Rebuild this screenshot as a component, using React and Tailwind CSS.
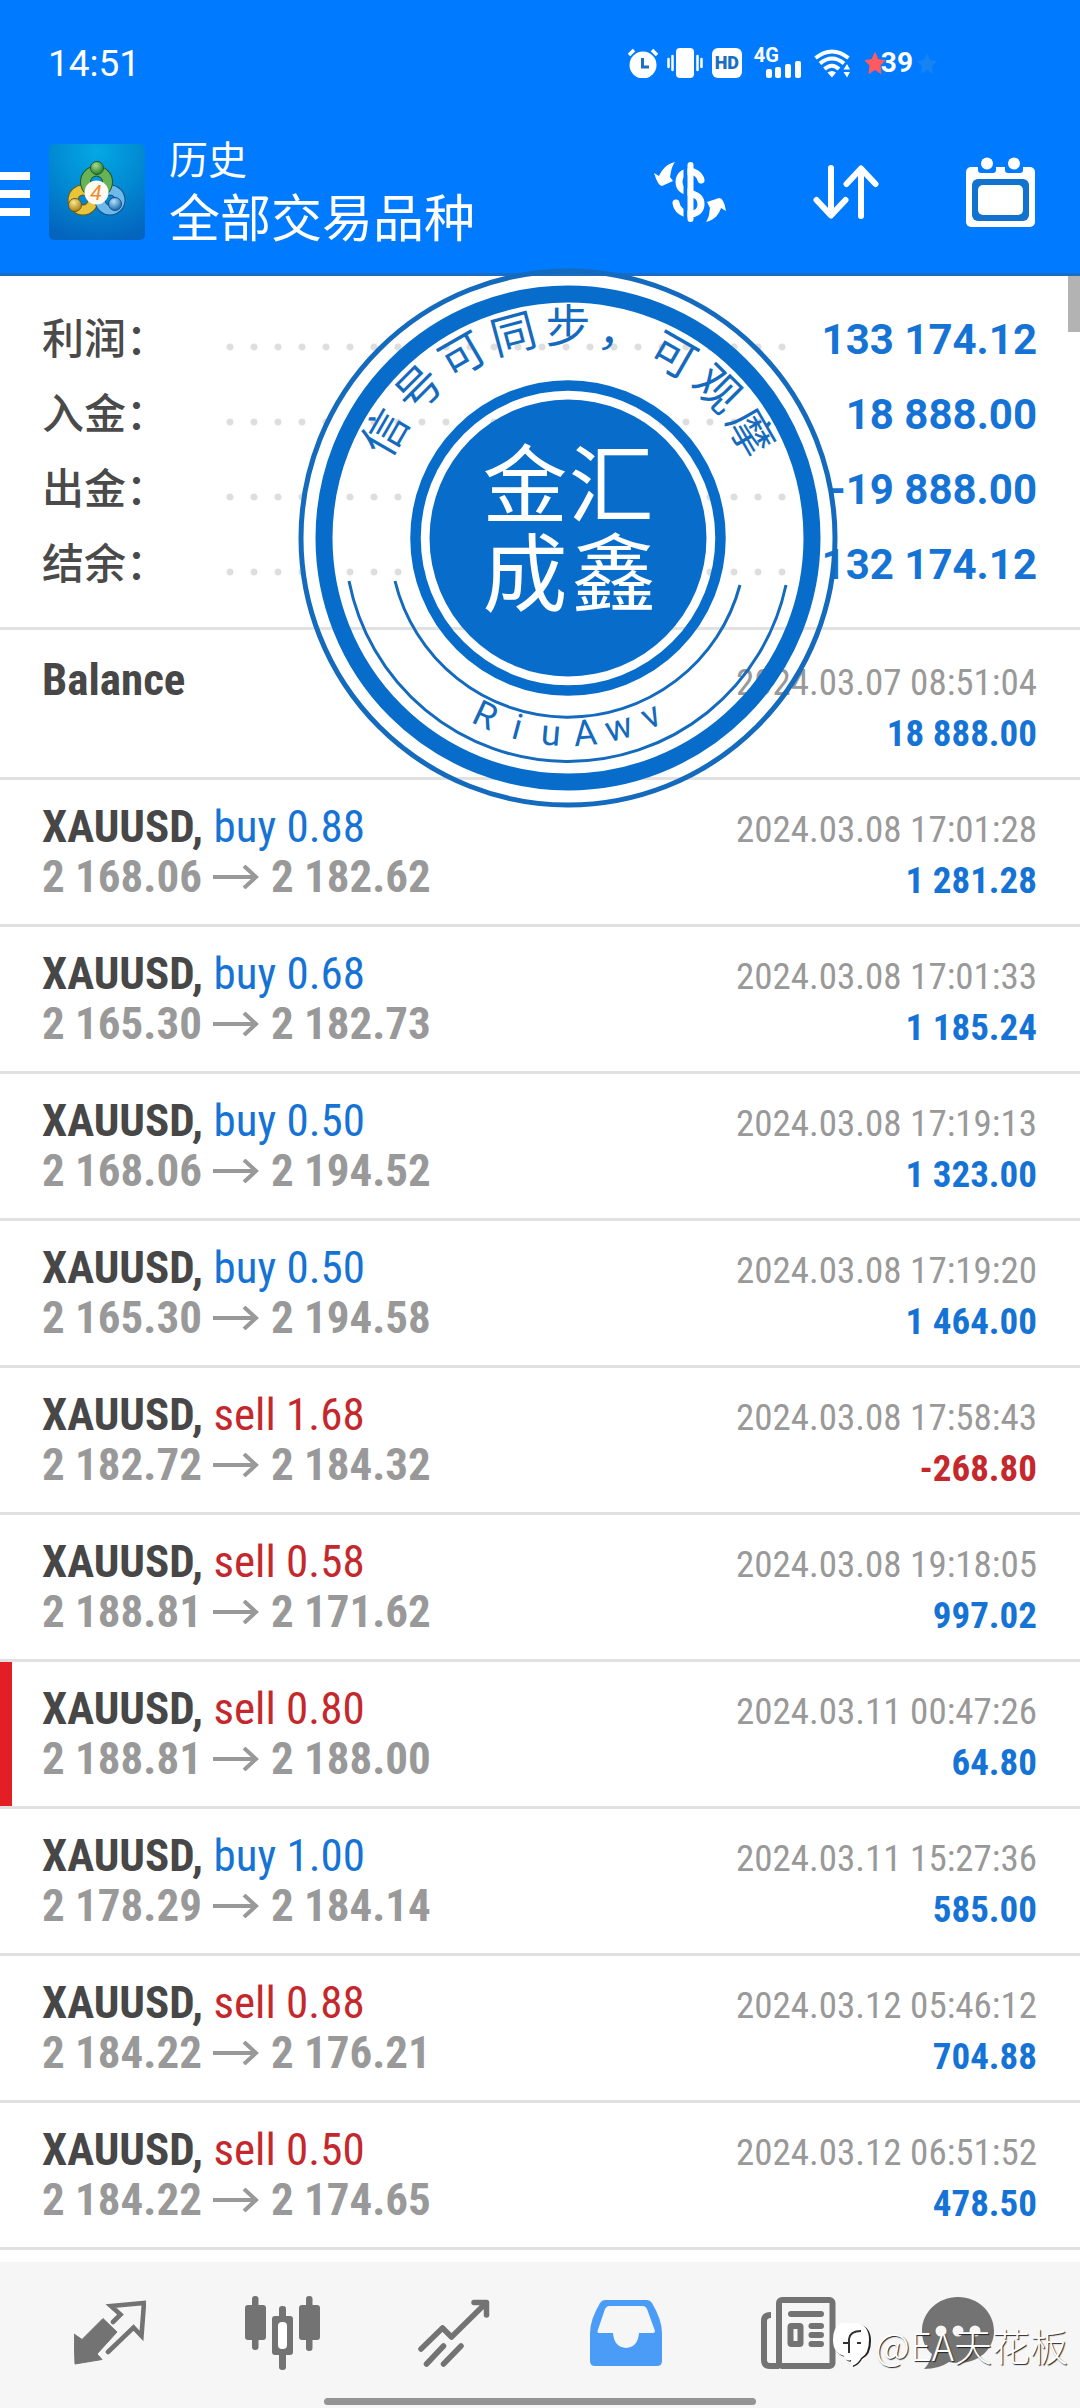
const deals = [
  { type: "buy", volume: "0.88", open: "2 168.06", close: "2 182.62", time: "2024.03.08 17:01:28", profit: "1 281.28" },
  { type: "buy", volume: "0.68", open: "2 165.30", close: "2 182.73", time: "2024.03.08 17:01:33", profit: "1 185.24" },
  { type: "buy", volume: "0.50", open: "2 168.06", close: "2 194.52", time: "2024.03.08 17:19:13", profit: "1 323.00" },
  { type: "buy", volume: "0.50", open: "2 165.30", close: "2 194.58", time: "2024.03.08 17:19:20", profit: "1 464.00" },
  { type: "sell", volume: "1.68", open: "2 182.72", close: "2 184.32", time: "2024.03.08 17:58:43", profit: "-268.80" },
  { type: "sell", volume: "0.58", open: "2 188.81", close: "2 171.62", time: "2024.03.08 19:18:05", profit: "997.02" },
  { type: "sell", volume: "0.80", open: "2 188.81", close: "2 188.00", time: "2024.03.11 00:47:26", profit: "64.80", marked: true },
  { type: "buy", volume: "1.00", open: "2 178.29", close: "2 184.14", time: "2024.03.11 15:27:36", profit: "585.00" },
  { type: "sell", volume: "0.88", open: "2 184.22", close: "2 176.21", time: "2024.03.12 05:46:12", profit: "704.88" },
  { type: "sell", volume: "0.50", open: "2 184.22", close: "2 174.65", time: "2024.03.12 06:51:52", profit: "478.50" },
];

const summary = [
  { label: "利润：", value: "133 174.12" },
  { label: "入金：", value: "18 888.00" },
  { label: "出金：", value: "-19 888.00" },
  { label: "结余：", value: "132 174.12" },
];

const STAR = "M10 0 L13 7 L20 8 L15 13 L16 21 L10 17 L4 21 L5 13 L0 8 L7 7 Z";

function StatusBar() {
  return (
    <div className="flex h-[126px] items-center justify-between pl-12 pr-[143px]">
      <span className="text-[37px] leading-none">14:51</span>
      <div className="flex items-center">
        <svg className="mr-[9px] h-[30px] w-[30px]" viewBox="0 0 30 30">
          <circle cx="15" cy="17" r="13.5" fill="currentColor" />
          <path d="M1 7 L6 2 M29 7 L24 2" stroke="currentColor" strokeWidth="3.5" />
          <path d="M14.5 10 V19 H21" fill="none" stroke="#1a6fc4" strokeWidth="3" />
        </svg>
        <svg className="mr-[9px] h-[30px] w-9" viewBox="0 0 36 30">
          <rect x="9" y="0" width="18" height="30" rx="4" fill="currentColor" />
          <path d="M1.5 11 V19 M5.5 8 V22 M30.5 8 V22 M34.5 11 V19" stroke="currentColor" strokeWidth="2.5" strokeLinecap="round" />
        </svg>
        <span className="mr-3 flex h-[30px] w-[30px] items-center justify-center rounded-md bg-white text-[18px] font-black leading-none text-[#1a6fc4]">
          HD
        </span>
        <div className="relative mr-[13px] h-[30px] w-[47px]">
          <span className="absolute left-0 top-0 text-[20px] font-bold leading-[15px]">4G</span>
          <svg className="absolute bottom-0 right-0 h-[18px] w-[35px]" viewBox="0 0 35 18" fill="currentColor">
            <rect x="0" y="9" width="6" height="9" rx="2" />
            <rect x="9" y="7" width="6" height="11" rx="2" />
            <rect x="19" y="4" width="6" height="14" rx="2" />
            <rect x="29" y="1" width="6" height="17" rx="2" />
          </svg>
        </div>
        <svg className="mr-[14px] h-[30px] w-[37px]" viewBox="0 0 37 30">
          <g fill="none" stroke="currentColor" strokeWidth="4">
            <path d="M1.5 10 Q18 -3 34.5 10" />
            <path d="M6 15.5 Q18 5.5 30 15.5" />
            <path d="M10.5 21 Q18 14.5 25 21" />
          </g>
          <path d="M13.5 24.5 Q18 21.5 22 24.5 L18 29.5 Z" fill="currentColor" />
          <path d="M29.5 21.5 L33 16 L36 21.5 Z M29.5 24 L33 29.5 L36 24 Z" fill="currentColor" />
        </svg>
        <svg className="h-[22px] w-[20px]" viewBox="0 0 20 21"><path d={STAR} fill="#ff5a60" stroke="#ff5a60" strokeLinejoin="round" /></svg>
        <span className="-ml-1 text-[28px] font-bold leading-none">39</span>
        <svg className="ml-1 h-[21px] w-[20px]" viewBox="0 0 20 21"><path d={STAR} fill="#1583f2" /></svg>
      </div>
    </div>
  );
}

function AppLogo() {
  return (
    <svg className="ml-[19px] h-24 w-24 shrink-0" viewBox="0 0 96 96" aria-label="MetaTrader 4">
      <defs>
        <radialGradient id="logo-bg" cx="50%" cy="8%" r="95%">
          <stop offset="0" stopColor="#03a8e4" />
          <stop offset="0.5" stopColor="#0289d2" />
          <stop offset="1" stopColor="#0464be" />
        </radialGradient>
        <radialGradient id="ball-g" cx="40%" cy="30%" r="70%"><stop offset="0" stopColor="#a9dc8c" /><stop offset="1" stopColor="#257b2c" /></radialGradient>
        <radialGradient id="ball-y" cx="40%" cy="30%" r="70%"><stop offset="0" stopColor="#fbe98a" /><stop offset="1" stopColor="#a8801a" /></radialGradient>
        <radialGradient id="ball-b" cx="40%" cy="30%" r="70%"><stop offset="0" stopColor="#b5e2fa" /><stop offset="1" stopColor="#1869ae" /></radialGradient>
      </defs>
      <rect width="96" height="96" rx="5" fill="url(#logo-bg)" />
      <g fill="none" strokeWidth="11">
        <circle cx="34" cy="56" r="10" stroke="#6b5a14" />
        <circle cx="34" cy="56" r="10" stroke="#e6c53c" strokeWidth="9" />
        <circle cx="61" cy="56" r="10" stroke="#164e85" />
        <circle cx="61" cy="56" r="10" stroke="#6db9ea" strokeWidth="9" />
        <circle cx="47.5" cy="38" r="11" stroke="#1e5926" />
        <circle cx="47.5" cy="38" r="11" stroke="#67b356" strokeWidth="9" />
      </g>
      <circle cx="48" cy="24" r="6.5" fill="url(#ball-g)" stroke="#1e5926" />
      <circle cx="26" cy="61" r="6.5" fill="url(#ball-y)" stroke="#6b5a14" />
      <circle cx="66" cy="60" r="6.5" fill="url(#ball-b)" stroke="#164e85" />
      <circle cx="47.5" cy="48.5" r="12" fill="#fffaf2" />
      <text x="47" y="56" textAnchor="middle" fontSize="21" fontStyle="italic" fill="#f08a2c">4</text>
    </svg>
  );
}

function Toolbar() {
  return (
    <div className="flex h-[150px] items-center border-b-3 border-[#1a6cc4] pb-4 pr-[45px]">
      <button aria-label="菜单" className="mt-1 flex w-[30px] flex-col gap-2.5">
        <span className="h-2 bg-white" />
        <span className="h-2 bg-white" />
        <span className="h-2 bg-white" />
      </button>
      <AppLogo />
      <h1 className="ml-6 flex-1 pt-2">
        <span className="block text-[39px] leading-12">历史</span>
        <span className="block text-[51px] leading-[70px]">全部交易品种</span>
      </h1>
      <div className="flex items-center gap-[87px]">
        <button aria-label="货币">
          <svg className="block h-[60px] w-[72px]" viewBox="0 0 72 60">
            <path d="M47 18 C44 6 25 7 25 20 C25 35 48 27 47 43 C46 56 24 55 22 41" fill="none" stroke="currentColor" strokeWidth="7" strokeLinecap="round" />
            <path d="M31.5 2 V58" stroke="#007aff" strokeWidth="4" />
            <path d="M36.5 3 V57" stroke="currentColor" strokeWidth="6" strokeLinecap="round" />
            <path d="M21 0 C17 5 17 11 16 15 L19 19 L8 24 Q4 24 0 11 L5 14 C8 8 12 2 21 0 Z" fill="currentColor" />
            <path d="M52 60 C56 54 55 50 56 46 L53 40 L65 36 Q70 36 72 49 L67 46 C65 52 61 58 52 60 Z" fill="currentColor" />
          </svg>
        </button>
        <button aria-label="排序">
          <svg className="block h-14 w-[66px]" viewBox="0 0 66 56" fill="none" stroke="currentColor" strokeWidth="6" strokeLinecap="round" strokeLinejoin="round">
            <path d="M18 4 V51 M3.500 36 L18 51.500 L32.500 36" />
            <path d="M48 52 V5 M33.500 20 L48 4.500 L62.500 20" />
          </svg>
        </button>
        <button aria-label="日期">
          <svg className="block h-[70px] w-[69px]" viewBox="0 0 69 70">
            <rect x="0" y="10" width="69" height="60" rx="5" fill="currentColor" />
            <path d="M12 8 H30 V13 Q30 16 27 16 H15 Q12 16 12 13 Z M39 8 H57 V13 Q57 16 54 16 H42 Q39 16 39 13 Z" fill="#007aff" />
            <circle cx="21" cy="6.5" r="6" fill="currentColor" />
            <circle cx="48" cy="6.5" r="6" fill="currentColor" />
            <rect x="6" y="22" width="57" height="42" rx="6" fill="#1173cf" />
            <rect x="12" y="28" width="45" height="30" rx="5" fill="currentColor" />
          </svg>
        </button>
      </div>
    </div>
  );
}

function Stamp() {
  const top = ["信", "号", "可", "同", "步", "，", "可", "观", "摩"];
  const bottom = ["R", "i", "u", "A", "w", "v"];

  return (
    <svg
      className="pointer-events-none absolute -top-2.5 left-1/2 z-10 -ml-[244px] h-[544px] w-[544px] font-['Noto_Sans_CJK_SC',sans-serif]"
      viewBox="-272 -272 544 544"
    >
      <g fill="none" stroke="#146abd">
        <circle r="267" strokeWidth="5" />
        <circle r="244" strokeWidth="17" stroke="#076cca" />
        <circle r="152.500" strokeWidth="10.500" stroke="#076cca" />
        <path d="M-219 43 A223 223 0 0 0 218 47" strokeWidth="3" />
        <path d="M-173 43 A178 178 0 0 0 172 47" strokeWidth="3" />
      </g>
      <circle r="138.500" fill="#076cca" />

      <g fontSize="85" textAnchor="middle" fill="#fff">
        <text x="-43" y="-22">金</text>
        <text x="43" y="-22">汇</text>
        <text x="-43" y="67">成</text>
        <text x="46" y="67">鑫</text>
      </g>

      {/* 环形文字 */}
      <g fontSize="45" textAnchor="middle" fill="#146abd">
        {top.map((char, i) => (
          <text key={i} y="-195" transform={`rotate(${(i - 4) * 15})`}>
            {char}
          </text>
        ))}
      </g>
      <g fontSize="36" textAnchor="middle" fill="#146abd" className="font-[Roboto,sans-serif]">
        {bottom.map((char, i) => (
          <text key={i} y="208" transform={`rotate(${25 - i * 10})`}>
            {char}
          </text>
        ))}
      </g>
    </svg>
  );
}

function Summary() {
  return (
    <section className="relative border-b-3 border-[#e1e1e1] pb-[25px] pl-[42px] pr-[43px] pt-[26px]">
      <dl>
        {summary.map((item) => (
          <div key={item.label} className="flex h-[75px] items-center">
            <dt className="w-44 text-[42px] font-medium leading-none text-[#4a4a4a]">{item.label}</dt>
            <span className="mt-[14px] h-6 flex-1 bg-[radial-gradient(circle,#dedede_3px,transparent_4px)] bg-[length:24px_24px]" />
            <dd className="w-[243px] whitespace-nowrap text-right text-[42px] font-bold leading-none text-[#1673d6]">
              {item.value}
            </dd>
          </div>
        ))}
      </dl>
      <Stamp />
      {/* 滚动条 */}
      <div className="absolute right-0 top-0 h-14 w-3 bg-[#b3b3b3]" />
    </section>
  );
}

function DealRow({ deal }) {
  const isBuy = deal.type === "buy";

  return (
    <li className="relative flex justify-between border-b-3 border-[#e1e1e1] pb-[18px] pl-[42px] pr-[43px] pt-[22px]">
      {deal.marked && <span className="absolute inset-y-0 left-0 w-3 bg-[#e31e24]" />}
      <div className="text-[45px] font-bold leading-[50px] text-[#999]">
        <p className="text-[#474747]">
          XAUUSD,{" "}
          <span className={isBuy ? "font-normal text-[#1673d6]" : "font-normal text-[#c4282d]"}>
            {deal.type} {deal.volume}
          </span>
        </p>
        <p className="flex items-center">
          {deal.open}
          <svg className="mx-[11px] h-6 w-[47px]" viewBox="0 0 47 24" fill="none" stroke="currentColor" strokeWidth="4">
            <path d="M0 12 H44 M31 1 L43 12 L31 23" />
          </svg>
          {deal.close}
        </p>
      </div>
      <div className="pt-0.5 text-right text-[37px] leading-[51px]">
        <p className="text-[#999]">{deal.time}</p>
        <p className={deal.profit.startsWith("-") ? "font-bold text-[#c4282d]" : "font-bold text-[#1673d6]"}>
          {deal.profit}
        </p>
      </div>
    </li>
  );
}

function TabBar() {
  return (
    <nav className="relative bg-[#f6f6f6] pb-[3px] pt-[34px] text-[#737373]">
      <div className="flex h-[74px] pl-6 pr-12">
        <button aria-label="行情" className="flex flex-1 items-center justify-center">
          <svg className="h-[66px] w-[72px]" viewBox="0 0 72 66">
            <path d="M0 34 L8 39.500 L29 18.500 L43 32 L23 54 L28 59.500 L1 64 Z" fill="currentColor" stroke="currentColor" strokeLinejoin="round" />
            <path d="M39 22 L46.500 14.500 L37 6 L70 3 L67.500 36 L59.500 27.500 L34 52" fill="none" stroke="currentColor" strokeWidth="4.600" strokeLinecap="round" />
          </svg>
        </button>
        <button aria-label="图表" className="flex flex-1 items-center justify-center">
          <svg className="h-[74px] w-[75px]" viewBox="0 0 75 74" fill="currentColor">
            <rect x="0" y="9" width="21" height="35" rx="3" />
            <rect x="7" y="0" width="6.500" height="54" rx="3" />
            <rect x="27" y="20" width="21" height="39" rx="3" />
            <rect x="34" y="10" width="7" height="64" rx="3" />
            <rect x="33" y="26" width="9" height="27" rx="4" fill="#fff" />
            <rect x="54" y="9" width="21" height="35" rx="3" />
            <rect x="61" y="0" width="6.500" height="55" rx="3" />
          </svg>
        </button>
        <button aria-label="交易" className="flex flex-1 items-center justify-center">
          <svg className="h-[68px] w-[72px]" viewBox="0 0 72 68" fill="none" stroke="currentColor" strokeWidth="5.500" strokeLinecap="round" strokeLinejoin="round">
            <path d="M3 50 L24.500 29 L33.500 38 L67 5 M56 3.500 H68.500 V16" />
            <path d="M8.500 65 L25.500 47 M25.500 65 L43 47" />
          </svg>
        </button>
        <button aria-label="历史" className="flex flex-1 items-center justify-center text-[#4a9cf6]">
          <svg className="h-[66px] w-[72px]" viewBox="0 0 72 66" fill="currentColor">
            <path d="M15 0 H57 Q60 0 62 3 Q72 20 72 33 V61 Q72 66 67 66 H5 Q0 66 0 61 V33 Q0 20 10 3 Q12 0 15 0 Z" />
            <path d="M19 6 H53 Q55.500 6 57 9 L65 31 Q65 33 63 33 H49 Q48 47 36 48 Q24 47 23 33 H9 Q7 33 7.500 31 L15 9 Q16.500 6 19 6 Z" fill="#f6f6f6" />
          </svg>
        </button>
        <button aria-label="新闻" className="flex flex-1 items-center justify-center">
          <svg className="h-[72px] w-[75px]" viewBox="0 0 75 72" fill="none" stroke="currentColor" strokeWidth="6" strokeLinecap="round">
            <rect x="18" y="3" width="53.500" height="66" rx="3" />
            <path d="M10 18 Q3 18 3 24 V63 Q3 69 9 69 H18" strokeLinecap="butt" />
            <path d="M30 17 H60 M50.500 29 H60 M50.500 38 H60 M50.500 47 H60" />
            <rect x="29.500" y="29" width="10" height="18" rx="1" strokeLinecap="butt" />
          </svg>
        </button>
        <button aria-label="聊天" className="flex w-[148px] items-center justify-center">
          <svg className="h-[72px] w-[72px]" viewBox="0 0 72 72" fill="currentColor">
            <path d="M36 0 C56 0 72 15 72 34 C72 53 56 66 36 66 Q32 66 27 65 Q17 72 2 72 Q8 66 10 57 C3 51 0 43 0 34 C0 15 16 0 36 0 Z" />
            <g fill="#f6f6f6">
              <circle cx="19" cy="34" r="5.5" />
              <circle cx="36" cy="34" r="5.5" />
              <circle cx="53" cy="34" r="5.5" />
            </g>
          </svg>
        </button>
      </div>
      <div className="mx-auto mt-7 h-[7px] w-2/5 rounded-full bg-[#949494]" />

      {/* 水印 */}
      <div className="absolute right-3 top-[54px] flex items-center gap-1 font-['Noto_Sans_CJK_SC',sans-serif] text-white">
        <svg className="h-[45px] w-[38px]" viewBox="0 0 38 45">
          <path d="M10 1 H26 Q38 4 38 18 Q38 32 29 36 Q27 41 20 44 L19 38 Q14 40 12 34 Q1 31 1 18 Q1 4 10 1 Z" fill="#222" />
          <path d="M9 0 H25 Q36 3 36 17 Q36 31 28 35 Q26 40 19 43 L18 37 Q13 39 11 33 Q0 30 0 17 Q0 3 9 0 Z" fill="#fff" />
          <path d="M10 20 H16 V30 M16 20 V16 Q17 8 28 8 M24 20 H28" fill="none" stroke="#333" strokeWidth="2" />
        </svg>
        <span className="text-[38px] font-light leading-[58px] [text-shadow:1px_1px_1px_#222]">@EA天花板</span>
      </div>
    </nav>
  );
}

export default function App() {
  return (
    <div className="min-h-screen bg-white font-[Roboto,'Noto_Sans_CJK_SC',sans-serif]">
      <header className="bg-[#007aff] text-white">
        <StatusBar />
        <Toolbar />
      </header>
      <main>
        <Summary />
        <ul className="mb-3 font-['Roboto_Condensed','Liberation_Sans_Narrow',sans-serif]">
          <li className="flex justify-between border-b-3 border-[#e1e1e1] pb-[18px] pl-[42px] pr-[43px] pt-[25px]">
            <p className="text-[45px] font-bold leading-[50px] text-[#474747]">Balance</p>
            <div className="pt-0.5 text-right text-[37px] leading-[51px]">
              <p className="text-[#999]">2024.03.07 08:51:04</p>
              <p className="font-bold text-[#1673d6]">18 888.00</p>
            </div>
          </li>
          {deals.map((deal) => (
            <DealRow key={deal.time} deal={deal} />
          ))}
        </ul>
      </main>
      <TabBar />
    </div>
  );
}
